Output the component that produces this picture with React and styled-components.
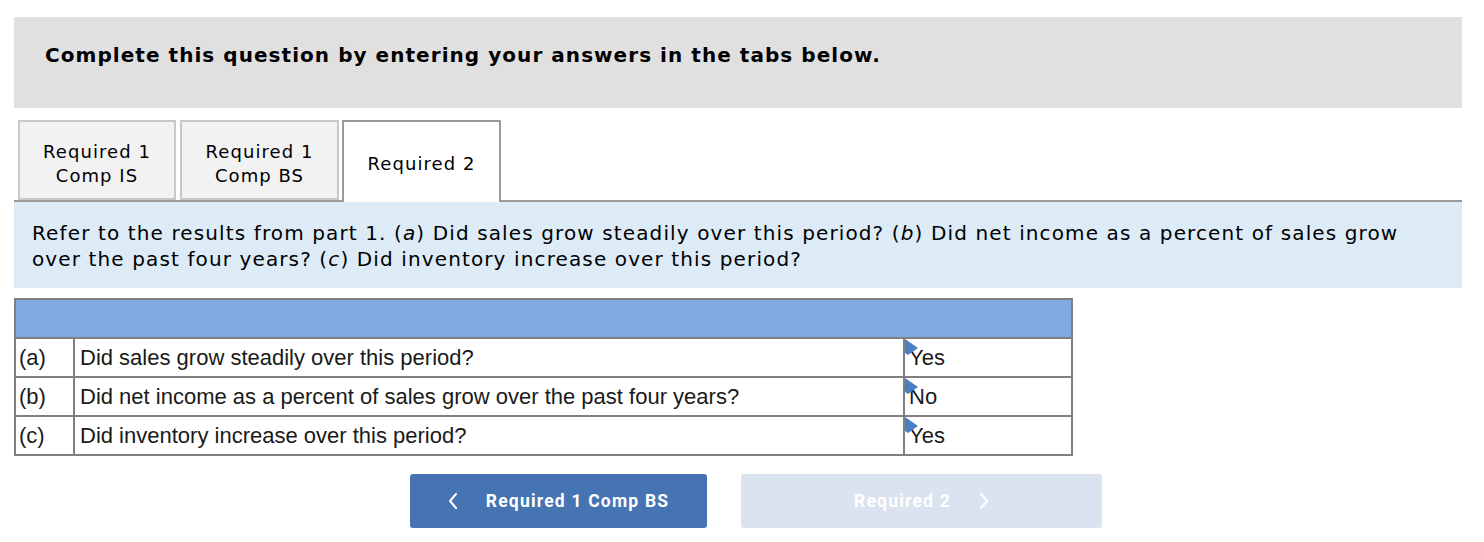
import React from "react";
import styled, { createGlobalStyle } from "styled-components";

const Global = createGlobalStyle`
  html, body { margin: 0; padding: 0; background: #ffffff; }
  body { font-family: "DejaVu Sans", Verdana, sans-serif; color: #000; }
`;

const Page = styled.div`
  width: 1448px;
  padding: 17px 0 0 14px;
`;

const Header = styled.div`
  height: 91px;
  background: #e0e0e0;
  box-sizing: border-box;
  padding: 24px 0 0 31px;
  font-family: "DejaVu Sans", Verdana, sans-serif;
  font-weight: bold;
  font-size: 20px;
  letter-spacing: 1.05px;
  line-height: 28px;
  color: #000;
`;

const TabBar = styled.div`
  display: flex;
  margin-top: 12px;
  padding-left: 4px;
  border-bottom: 2px solid #999999;
  height: 80px;
`;

const Tab = styled.div`
  box-sizing: border-box;
  width: ${(p) => p.$w}px;
  margin-right: ${(p) => p.$gap}px;
  height: ${(p) => (p.$active ? 82 : 80)}px;
  display: flex;
  align-items: center;
  justify-content: center;
  text-align: center;
  font-family: "DejaVu Sans", Verdana, sans-serif;
  font-size: 18px;
  letter-spacing: 1.05px;
  line-height: 24px;
  color: #000;
  background: ${(p) => (p.$active ? "#ffffff" : "#f2f2f2")};
  border: 2px solid ${(p) => (p.$active ? "#999999" : "#c8c8c8")};
  border-bottom: ${(p) => (p.$active ? "none" : "2px solid #c8c8c8")};
  position: relative;
  z-index: ${(p) => (p.$active ? 1 : 0)};
  padding-top: ${(p) => (p.$active ? 4 : 8)}px;
`;

const Panel = styled.div`
  background: #ddebf7;
  height: 86px;
  box-sizing: border-box;
  padding: 18px 18px 0 18px;
  font-family: "DejaVu Sans", Verdana, sans-serif;
  font-size: 20px;
  letter-spacing: 1.12px;
  line-height: 26px;
  color: #000;
  white-space: nowrap;
`;

const Table = styled.table`
  margin-top: 10px;
  width: 1059px;
  border-collapse: collapse;
  border: 2px solid #808080;
  font-family: "Liberation Sans", Arial, sans-serif;
  font-size: 22px;
  color: #1a1a1a;
`;

const HeadRow = styled.tr`
  height: 39px;
  background: #80aadf;
`;

const Row = styled.tr`
  height: 39px;
`;

const Cell = styled.td`
  border: 2px solid #808080;
  padding: 0 0 0 ${(p) => p.$pad ?? 5}px;
  width: ${(p) => (p.$w ? `${p.$w}px` : "auto")};
  vertical-align: middle;
  box-sizing: border-box;
  position: relative;
  line-height: 24px;
`;

const Answer = styled.span`
  display: inline-block;
  padding-top: 1px;
`;

const Flag = styled.svg`
  position: absolute;
  left: 0;
  top: 0;
`;

const ButtonRow = styled.div`
  display: flex;
  gap: 34px;
  margin-top: 18px;
  padding-left: 396px;
`;

const NavButton = styled.div`
  box-sizing: border-box;
  width: ${(p) => p.$w}px;
  height: 54px;
  border-radius: 3px;
  background: ${(p) => (p.$disabled ? "#dae3ef" : "#4674b2")};
  color: #ffffff;
  display: flex;
  align-items: center;
  justify-content: center;
  gap: 28px;
  font-family: Roboto, "Liberation Sans", sans-serif;
  font-weight: 700;
  font-size: 17.5px;
  letter-spacing: 1.2px;
`;

const Chevron = ({ dir }) => (
  <svg width="10" height="16" viewBox="0 0 10 16">
    <polyline
      points={dir === "left" ? "8,1 2,8 8,15" : "2,1 8,8 2,15"}
      fill="none"
      stroke="currentColor"
      strokeWidth="2"
      strokeLinecap="round"
      strokeLinejoin="round"
    />
  </svg>
);

const DropFlag = () => (
  <Flag width="14" height="16" viewBox="0 0 14 16">
    <polygon points="0,0 13,9 3,16 0,14" fill="#4a7fc4" />
  </Flag>
);

const rows = [
  ["(a)", "Did sales grow steadily over this period?", "Yes"],
  ["(b)", "Did net income as a percent of sales grow over the past four years?", "No"],
  ["(c)", "Did inventory increase over this period?", "Yes"],
];

export default function App() {
  return (
    <>
      <Global />
      <Page>
        <Header>Complete this question by entering your answers in the tabs below.</Header>
        <TabBar>
          <Tab $w={158} $gap={4}>
            Required 1<br />Comp IS
          </Tab>
          <Tab $w={159} $gap={3}>
            Required 1<br />Comp BS
          </Tab>
          <Tab $w={159} $gap={0} $active>
            Required 2
          </Tab>
        </TabBar>
        <Panel>
          Refer to the results from part 1. (<i>a</i>) Did sales grow steadily over this period? (<i>b</i>) Did net income as a percent of sales grow
          <br />
          over the past four years? (<i>c</i>) Did inventory increase over this period?
        </Panel>
        <Table>
          <tbody>
            <HeadRow>
              <Cell colSpan={3} />
            </HeadRow>
            {rows.map(([k, q, a]) => (
              <Row key={k}>
                <Cell $w={59} $pad={3}>{k}</Cell>
                <Cell $w={830} $pad={5}>{q}</Cell>
                <Cell $pad={4}>
                  <DropFlag />
                  <Answer>{a}</Answer>
                </Cell>
              </Row>
            ))}
          </tbody>
        </Table>
        <ButtonRow>
          <NavButton $w={297}>
            <Chevron dir="left" />
            <span>Required 1 Comp BS</span>
          </NavButton>
          <NavButton $w={361} $disabled>
            <span>Required 2</span>
            <Chevron dir="right" />
          </NavButton>
        </ButtonRow>
      </Page>
    </>
  );
}
